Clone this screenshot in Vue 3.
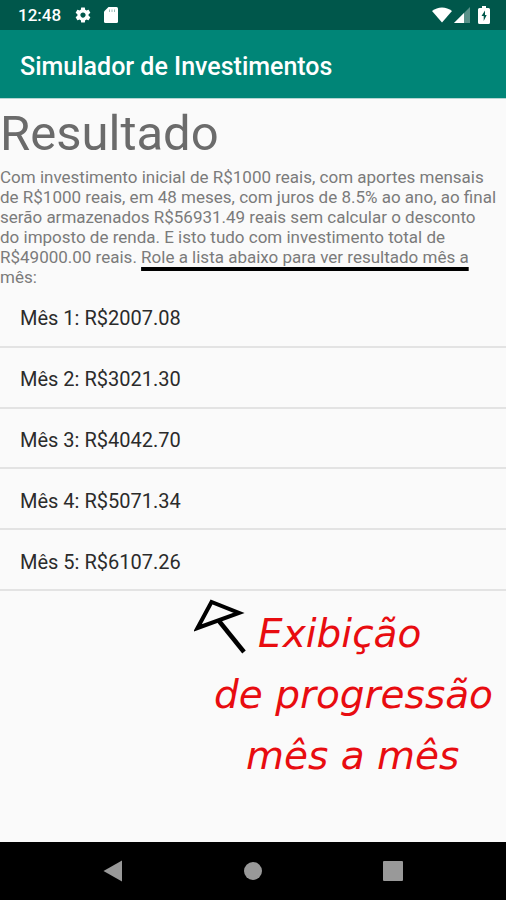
<script setup>
const months = [
  { month: 1, total: '2007.08' },
  { month: 2, total: '3021.30' },
  { month: 3, total: '4042.70' },
  { month: 4, total: '5071.34' },
  { month: 5, total: '6107.26' },
]
</script>

<template>
  <div class="screen">
    <div class="status">
      <span class="clock">12:48</span>
      <svg class="gear" viewBox="0 0 24 24" width="18" height="18" aria-hidden="true">
        <path fill="#fff" d="M19.43 12.98c.04-.32.07-.64.07-.98s-.03-.66-.07-.98l2.11-1.65c.19-.15.24-.42.12-.64l-2-3.46c-.12-.22-.39-.3-.61-.22l-2.49 1c-.52-.4-1.08-.73-1.69-.98l-.38-2.65C14.46 2.18 14.25 2 14 2h-4c-.25 0-.46.18-.49.42l-.38 2.65c-.61.25-1.17.59-1.69.98l-2.49-1c-.23-.09-.49 0-.61.22l-2 3.46c-.13.22-.07.49.12.64l2.11 1.65c-.04.32-.07.65-.07.98s.03.66.07.98l-2.11 1.65c-.19.15-.24.42-.12.64l2 3.46c.12.22.39.3.61.22l2.49-1c.52.4 1.08.73 1.69.98l.38 2.65c.03.24.24.42.49.42h4c.25 0 .46-.18.49-.42l.38-2.65c.61-.25 1.17-.59 1.69-.98l2.49 1c.23.09.49 0 .61-.22l2-3.46c.12-.22.07-.49-.12-.64l-2.11-1.65zM12 15.5c-1.93 0-3.5-1.57-3.5-3.5s1.57-3.5 3.5-3.5 3.5 1.57 3.5 3.5-1.57 3.500-3.500 3.500z" />
      </svg>
      <svg class="card" viewBox="0 0 14 16" width="14" height="16" aria-hidden="true">
        <path fill="#fff" d="M4.500 0H12.500Q14 0 14 1.500V14.500Q14 16 12.500 16H1.500Q0 16 0 14.500V4.500Z" />
        <path stroke="#00574b" stroke-opacity=".4" stroke-width="1" d="M5.500 2.500V5M8 2.500V5M10.500 2.500V5" />
      </svg>
      <span class="spacer"></span>
      <svg viewBox="0 0 20 16" width="20" height="16" aria-hidden="true">
        <path fill="#fff" d="M0 4Q4.500 0.500 10 0.500T20 4L10 15.500Z" />
      </svg>
      <svg class="signal" viewBox="0 0 16 16" width="16" height="16" aria-hidden="true">
        <path fill="#fff" fill-opacity=".35" d="M0 16L16 0V16Z" />
        <path fill="#fff" d="M0 16L10 6V16Z" />
      </svg>
      <svg class="battery" viewBox="0 0 12 18" width="12" height="18" aria-hidden="true">
        <path fill="#fff" d="M4 0H8V2H10.500Q12 2 12 3.500V16.500Q12 18 10.500 18H1.500Q0 18 0 16.500V3.500Q0 2 1.500 2H4Z" />
        <path fill="#00574b" d="M7 4.500L3.500 10H5.700V15L8.700 9H7Z" />
      </svg>
    </div>

    <header class="appbar">
      <h1>Simulador de Investimentos</h1>
    </header>

    <main class="content">
      <h2>Resultado</h2>
      <p class="summary">
        <span class="row">Com investimento inicial de R$1000 reais, com aportes mensais</span>
        <span class="row">de R$1000 reais, em 48 meses, com juros de 8.5% ao ano, ao final</span>
        <span class="row">serão armazenados R$56931.49 reais sem calcular o desconto</span>
        <span class="row">do imposto de renda. E isto tudo com investimento total de</span>
        <span class="row">
          <span>R$49000.00 reais. </span>
          <span class="marked">Role a lista abaixo para ver resultado mês a</span>
        </span>
        <span class="row">mês:</span>
      </p>
      <ul class="months">
        <li v-for="item in months" :key="item.month">Mês {{ item.month }}: R${{ item.total }}</li>
      </ul>
      <div class="note">
        <svg class="arrow" viewBox="0 0 52 56" width="52" height="56" aria-hidden="true">
          <g fill="none" stroke="#000" stroke-width="4">
            <path d="M3.500 29L17.500 3L45 14Z" />
            <path stroke-width="4.500" d="M25 22L50 53" />
          </g>
        </svg>
        <p class="line first">Exibição</p>
        <p class="line second">de progressão</p>
        <p class="line third">mês a mês</p>
      </div>
    </main>

    <nav class="navbar" aria-label="Sistema">
      <button type="button" aria-label="Voltar">
        <svg viewBox="0 0 20 22" width="20" height="22"><path fill="#999" d="M19 .5V21.500L.5 11Z" /></svg>
      </button>
      <button type="button" aria-label="Início">
        <svg viewBox="0 0 20 20" width="20" height="20"><circle cx="10" cy="10" r="9" fill="#999" /></svg>
      </button>
      <button type="button" aria-label="Recentes">
        <svg viewBox="0 0 20 20" width="20" height="20"><rect width="20" height="20" rx="1" fill="#999" /></svg>
      </button>
    </nav>
  </div>
</template>

<style>
body {
  margin: 0;
  background: #fafafa;
}
</style>

<style scoped>
.screen {
  display: flex;
  flex-direction: column;
  min-height: 100vh;
  background: #fafafa;
  font-family: Roboto, "Liberation Sans", sans-serif;
}
h1,
h2,
p,
ul {
  margin: 0;
  padding: 0;
}
svg {
  display: block;
  flex: none;
}
.status {
  display: flex;
  align-items: center;
  height: 30px;
  padding: 0 16px 0 18px;
  background: #00574b;
  color: #fff;
}
.clock {
  font-size: 17px;
  font-weight: 500;
  line-height: 30px;
}
.gear {
  margin-left: 13px;
}
.card {
  margin-left: 12px;
}
.spacer {
  flex: 1;
}
.signal {
  margin-left: 2px;
}
.battery {
  margin-left: 8px;
}
.appbar {
  display: flex;
  align-items: center;
  height: 63px;
  padding: 5px 20px 0;
  background: #008577;
  border-bottom: 1px solid #b5d5d2;
  color: #fff;
}
h1 {
  font-size: 25px;
  font-weight: 500;
  line-height: 32px;
}
.content {
  flex: 1;
}
h2 {
  padding-top: 5px;
  font-size: 49px;
  font-weight: 400;
  line-height: 60px;
  color: #6b6b6b;
}
.summary {
  padding-top: 3px;
  font-size: 17px;
  line-height: 20px;
  color: #7b7b7b;
}
.row {
  display: block;
}
.marked {
  text-decoration: underline 4px #000;
  text-underline-offset: 4px;
  text-decoration-skip-ink: none;
}
.months {
  display: grid;
  grid-auto-rows: 1fr;
  min-height: 304px;
  list-style: none;
}
.months li {
  display: flex;
  align-items: center;
  padding: 4px 20px 0;
  border-bottom: 2px solid #e3e3e3;
  font-size: 20px;
  line-height: 24px;
  color: #2b2b2b;
}
.note {
  position: relative;
  padding: 12px 16px 0 194px;
}
.arrow {
  position: absolute;
  top: 8px;
  left: 194px;
}
.line {
  font-family: "Segoe Script", "DejaVu Sans", sans-serif;
  font-size: 39px;
  font-style: italic;
  font-weight: 200;
  line-height: 61px;
  color: #e80c10;
  white-space: nowrap;
}
.first {
  padding-left: 64px;
}
.second {
  padding-left: 20px;
}
.third {
  padding-left: 52px;
}
.navbar {
  display: flex;
  justify-content: center;
  gap: 80px;
  height: 58px;
  background: #000;
}
.navbar button {
  display: flex;
  align-items: center;
  justify-content: center;
  width: 60px;
  padding: 0;
  border: 0;
  background: none;
}
</style>
